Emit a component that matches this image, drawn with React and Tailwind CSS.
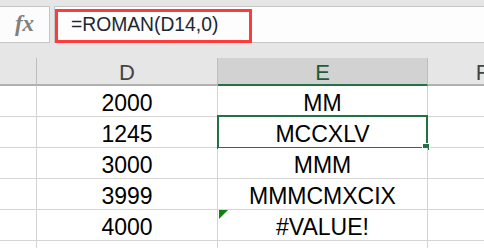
import React from "react";

const rows = [
  { d: "2000", e: "MM" },
  { d: "1245", e: "MCCXLV", selected: true },
  { d: "3000", e: "MMM" },
  { d: "3999", e: "MMMCMXCIX" },
  { d: "4000", e: "#VALUE!", error: true },
  { d: "", e: "" },
];

const cellBase =
  "h-[31px] border-b border-r border-[#d4d4d4] bg-white flex items-center justify-center pt-[5px] text-[23px] leading-[25px] text-black";

const App = () => {
  return (
    <div
      className="w-[484px] h-[248px] overflow-hidden bg-[#e6e6e6]"
      style={{ fontFamily: '"Liberation Sans", Arial, sans-serif' }}
    >
      {/* formula bar */}
      <div className="flex h-[43px] pt-[6px]">
        <div className="w-[50px] h-[37px] bg-[#fcfcfc] border-y border-r border-[#c6c6c6] flex items-center justify-center">
          <span
            className="italic font-bold text-[23px] text-[#808080] pb-[1px]"
            style={{ fontFamily: '"Liberation Serif", "Times New Roman", serif' }}
          >
            fx
          </span>
        </div>
        <div className="relative ml-[4px] flex-1 h-[37px] bg-[#fdfdfd] border-y border-l border-[#c6c6c6] flex items-center pl-[16px]">
          <span className="text-[19.3px] text-[#1d2733] pt-[1px]">=ROMAN(D14,0)</span>
          <div className="absolute left-0 top-[2px] w-[197px] h-[34px] border-[3px] border-[#ff3b3b]"></div>
        </div>
      </div>

      {/* column headers */}
      <div className="mt-[15px] grid grid-cols-[37px_181px_210px_110px]">
        <div className="h-[28px] border-r border-b-2 border-[#bdbdbd] border-b-[#b0b0b0] bg-[#e6e6e6]"></div>
        <div className="h-[28px] border-r border-b-2 border-[#bdbdbd] border-b-[#b0b0b0] bg-[#e6e6e6] flex items-center justify-center pt-[4px] text-[22px] leading-[22px] text-[#444]">
          D
        </div>
        <div className="h-[28px] border-r border-b-2 border-[#bdbdbd] border-b-[#217346] bg-[#d2d2d2] flex items-center justify-center pt-[4px] text-[22px] leading-[22px] text-[#1f5c3a]">
          E
        </div>
        <div className="h-[28px] border-r border-b-2 border-[#bdbdbd] border-b-[#b0b0b0] bg-[#e6e6e6] flex items-center justify-center pt-[4px] text-[22px] leading-[22px] text-[#444]">
          F
        </div>

        {rows.map((row, i) => (
          <React.Fragment key={i}>
            <div className={cellBase}></div>
            <div className={cellBase}>{row.d}</div>
            <div className={`${cellBase} relative`}>
              {row.e}
              {row.selected && (
                <div className="absolute -left-[1px] -top-[2px] -right-[1px] -bottom-[2px] border-2 border-[#217346]">
                  <div className="absolute -right-[4px] -bottom-[4px] w-[8px] h-[8px] bg-[#217346] border border-white"></div>
                </div>
              )}
              {row.error && (
                <svg className="absolute left-[1px] top-0" width="9" height="9" viewBox="0 0 9 9">
                  <polygon points="0,0 9,0 0,9" fill="#0e820e" />
                </svg>
              )}
            </div>
            <div className={cellBase}></div>
          </React.Fragment>
        ))}
      </div>
    </div>
  );
};

export default App;
